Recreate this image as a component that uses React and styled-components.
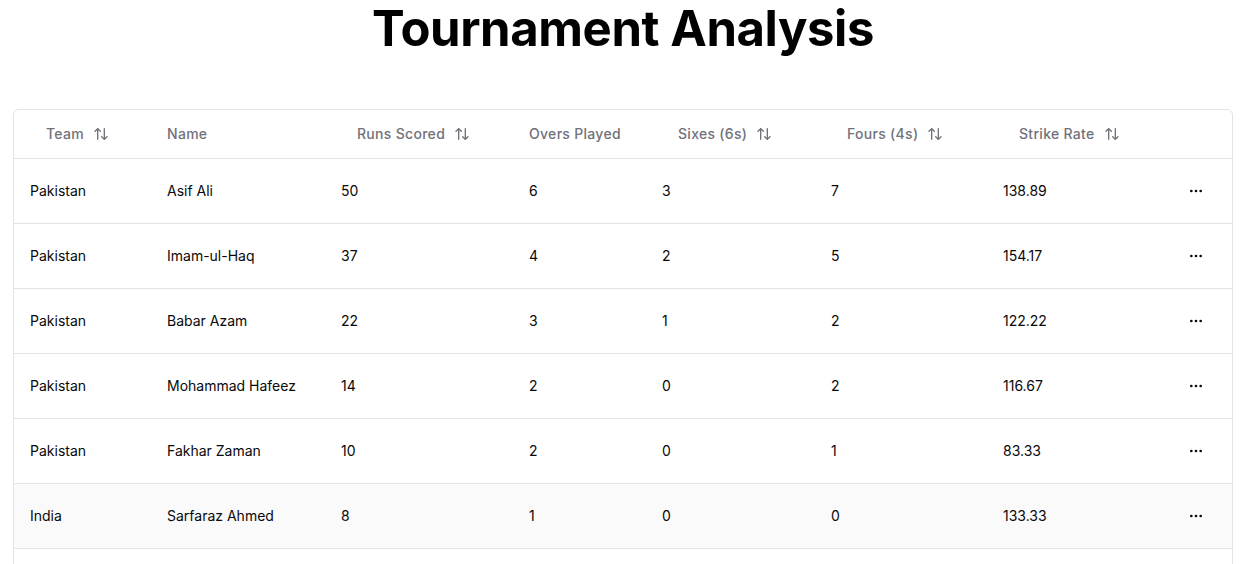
import React from 'react'
import styled, { createGlobalStyle } from 'styled-components'
import { ArrowUpDown, MoreHorizontal } from 'lucide-react'

const GlobalStyle = createGlobalStyle`
  * { box-sizing: border-box; }
  body {
    margin: 0;
    background: #ffffff;
    font-family: Inter, "Noto Sans", sans-serif;
    color: #09090b;
  }
`

const Page = styled.div`
  padding: 0 18px 0 13px;
`

const Title = styled.h1`
  margin: 0;
  padding-top: 3px;
  height: 109px;
  text-align: center;
  font-size: 49px;
  line-height: 52px;
  font-weight: 700;
  letter-spacing: -0.4px;
  color: #000;
`

const Card = styled.div`
  border: 1px solid #e4e4e7;
  border-radius: 6px;
  overflow: hidden;
`

const Table = styled.table`
  width: 100%;
  table-layout: fixed;
  border-collapse: collapse;
  font-size: 14px;
`

const Head = styled.th`
  height: 48px;
  padding: 0 16px;
  text-align: left;
  font-weight: 500;
  letter-spacing: 0.3px;
  color: #71717a;
  border-bottom: 1px solid #e4e4e7;
`

const SortButton = styled.button`
  display: inline-flex;
  align-items: center;
  height: 40px;
  padding: 0 16px;
  border: 0;
  background: transparent;
  font: inherit;
  letter-spacing: inherit;
  color: inherit;
  cursor: pointer;
  svg { margin-left: 9px; }
`

const Row = styled.tr`
  background: ${p => (p.$muted ? '#fafafa' : '#ffffff')};
  border-bottom: 1px solid #e4e4e7;
`

const Cell = styled.td`
  height: 64px;
  padding: 16px;
  white-space: nowrap;
`

const ActionButton = styled.button`
  display: inline-flex;
  align-items: center;
  justify-content: center;
  width: 32px;
  height: 32px;
  padding: 0;
  border: 0;
  background: transparent;
  color: #09090b;
`

const columns = [
  { key: 'team', label: 'Team', width: 137, sort: true },
  { key: 'name', label: 'Name', width: 174 },
  { key: 'runs', label: 'Runs Scored', width: 188, sort: true },
  { key: 'overs', label: 'Overs Played', width: 133 },
  { key: 'sixes', label: 'Sixes (6s)', width: 169, sort: true },
  { key: 'fours', label: 'Fours (4s)', width: 172, sort: true },
  { key: 'rate', label: 'Strike Rate', width: 177, sort: true },
]

const players = [
  { team: 'Pakistan', name: 'Asif Ali', runs: 50, overs: 6, sixes: 3, fours: 7, rate: '138.89' },
  { team: 'Pakistan', name: 'Imam-ul-Haq', runs: 37, overs: 4, sixes: 2, fours: 5, rate: '154.17' },
  { team: 'Pakistan', name: 'Babar Azam', runs: 22, overs: 3, sixes: 1, fours: 2, rate: '122.22' },
  { team: 'Pakistan', name: 'Mohammad Hafeez', runs: 14, overs: 2, sixes: 0, fours: 2, rate: '116.67' },
  { team: 'Pakistan', name: 'Fakhar Zaman', runs: 10, overs: 2, sixes: 0, fours: 1, rate: '83.33' },
  { team: 'India', name: 'Sarfaraz Ahmed', runs: 8, overs: 1, sixes: 0, fours: 0, rate: '133.33', muted: true },
  { team: 'India', name: 'Virat Kohli', runs: 6, overs: 1, sixes: 0, fours: 1, rate: '100.00' },
]

export default function App() {
  return (
    <>
      <GlobalStyle />
      <Page>
        <Title>Tournament Analysis</Title>
        <Card>
          <Table>
            <colgroup>
              {columns.map(c => (
                <col key={c.key} style={{ width: c.width }} />
              ))}
              <col />
            </colgroup>
            <thead>
              <tr>
                {columns.map(c => (
                  <Head key={c.key}>
                    {c.sort ? (
                      <SortButton>
                        {c.label}
                        <ArrowUpDown size={16} strokeWidth={2} />
                      </SortButton>
                    ) : (
                      c.label
                    )}
                  </Head>
                ))}
                <Head />
              </tr>
            </thead>
            <tbody>
              {players.map(p => (
                <Row key={p.name} $muted={p.muted}>
                  {columns.map(c => (
                    <Cell key={c.key}>{p[c.key]}</Cell>
                  ))}
                  <Cell>
                    <ActionButton>
                      <MoreHorizontal size={16} strokeWidth={2} />
                    </ActionButton>
                  </Cell>
                </Row>
              ))}
            </tbody>
          </Table>
        </Card>
      </Page>
    </>
  )
}
